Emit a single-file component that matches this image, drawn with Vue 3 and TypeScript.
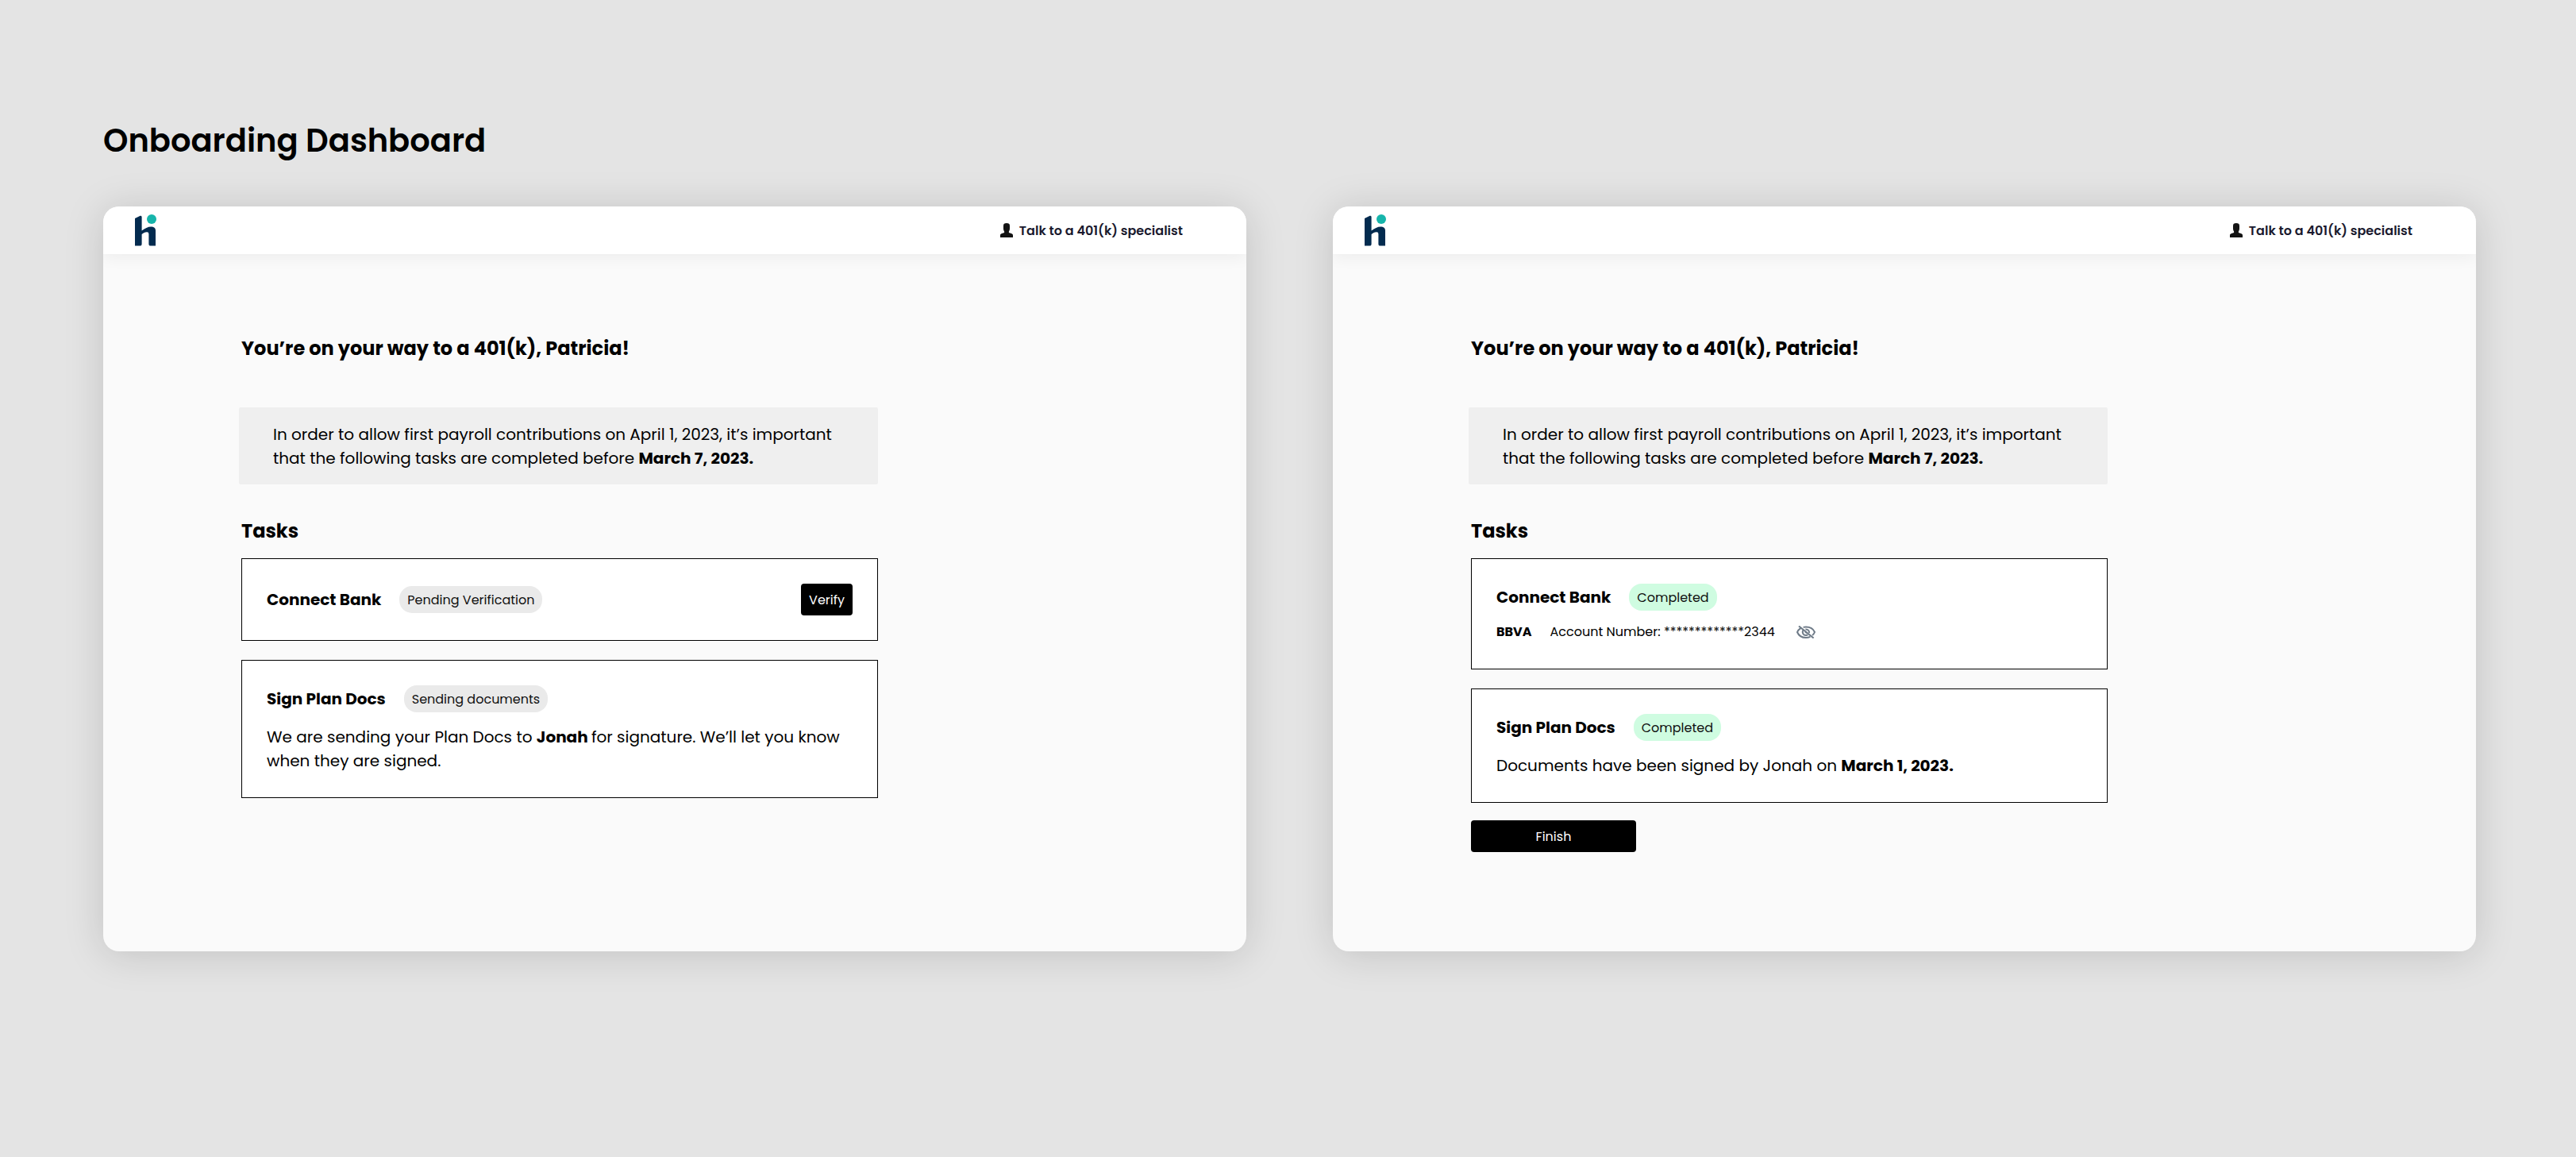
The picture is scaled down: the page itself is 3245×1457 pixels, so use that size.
<script setup lang="ts">
interface Task {
  title: string
  status: string
  done: boolean
  action?: string
  account?: { bank: string; number: string }
  message?: { before: string; strong: string; after: string }
}

interface Screen {
  id: string
  tasks: Task[]
  finish: boolean
}

const screens: Screen[] = [
  {
    id: 'pending',
    finish: false,
    tasks: [
      { title: 'Connect Bank', status: 'Pending Verification', done: false, action: 'Verify' },
      {
        title: 'Sign Plan Docs',
        status: 'Sending documents',
        done: false,
        message: {
          before: 'We are sending your Plan Docs to ',
          strong: 'Jonah ',
          after: 'for signature. We’ll let you know when they are signed.',
        },
      },
    ],
  },
  {
    id: 'completed',
    finish: true,
    tasks: [
      {
        title: 'Connect Bank',
        status: 'Completed',
        done: true,
        account: { bank: 'BBVA', number: '*************2344' },
      },
      {
        title: 'Sign Plan Docs',
        status: 'Completed',
        done: true,
        message: { before: 'Documents have been signed by Jonah on ', strong: 'March 1, 2023.', after: '' },
      },
    ],
  },
]
</script>

<template>
  <main class="board">
    <h1 class="board-title">Onboarding Dashboard</h1>
    <div class="screens">
      <section v-for="screen in screens" :key="screen.id" class="screen">
        <header class="topbar">
          <svg class="logo" viewBox="0 0 28 40" role="img" aria-label="hi">
            <path
              fill="#032b4f"
              d="M0 5 L6.6 1.8 Q8.6 1.2 8.6 3.2 V20.4 C12.5 17.4 16.5 15.4 20 15.4 C24 15.4 26 17 26 20.6 V39.6 H19.6 Q17.4 39.6 17.4 37.4 V24.4 Q17.4 22 14.8 22.2 C12.6 22.4 10.4 23.4 8.6 25 V37.4 Q8.6 39.6 6.4 39.6 H0 Z"
            />
            <circle cx="21" cy="6" r="6" fill="#17b5ab" />
          </svg>
          <a class="talk" href="#">
            <svg class="person" viewBox="0 0 16 18" aria-hidden="true">
              <path
                fill="#141414"
                d="M4 3.4 C4 1 5.2 0 8 0 C10.8 0 12 1 12 3.4 V6.8 C12 8.6 11.4 9.8 10.9 10.6 V12 L14 13 C15.5 13.5 16 14.2 16 15.4 V18 H0 V15.4 C0 14.2 .5 13.5 2 13 L5.1 12 V10.6 C4.6 9.8 4 8.6 4 6.8 Z"
              />
            </svg>
            <span>Talk to a 401(k) specialist</span>
          </a>
        </header>

        <div class="content">
          <h2 class="heading">You’re on your way to a 401(k), Patricia!</h2>
          <p class="notice">
            In order to allow first payroll contributions on April 1, 2023, it’s important
            that the following tasks are completed before <strong>March 7, 2023.</strong>
          </p>
          <h3 class="heading tasks-heading">Tasks</h3>
          <div class="tasks">
            <article v-for="task in screen.tasks" :key="task.title" class="card">
              <div class="card-row">
                <h4 class="card-title">{{ task.title }}</h4>
                <span class="pill" :class="{ done: task.done }">{{ task.status }}</span>
                <button v-if="task.action" type="button" class="btn verify">{{ task.action }}</button>
              </div>
              <div v-if="task.account" class="account">
                <strong>{{ task.account.bank }}</strong>
                <span>Account Number: {{ task.account.number }}</span>
                <button type="button" class="reveal" aria-label="Show account number">
                  <svg viewBox="0 0 24 16" fill="none" stroke="#6f7b88" stroke-width="2" aria-hidden="true">
                    <path d="M5.5 2.8 C3.4 4.2 1.8 6 1 8 C2.8 12.4 7 15 12 15 C14 15 15.8 14.6 17.4 13.9" />
                    <path d="M8.6 1.9 C9.7 1.6 10.8 1.5 12 1.5 C17 1.5 21.2 4 23 8 C22.4 9.5 21.4 10.9 20 12" />
                    <path d="M8.2 5.6 C6.8 8.6 8.6 12 12 12 C12.9 12 13.6 11.8 14.3 11.4" />
                    <path d="M11.4 4.4 C14.4 4.2 16.4 6.4 16 9" />
                    <path d="M11 7.4 L13 9.2" />
                    <path d="M3 .4 L21.6 15.6" />
                  </svg>
                </button>
              </div>
              <p v-if="task.message" class="message">
                {{ task.message.before }}<strong>{{ task.message.strong }}</strong>{{ task.message.after }}
              </p>
            </article>
          </div>
          <button v-if="screen.finish" type="button" class="btn finish">Finish</button>
        </div>
      </section>
    </div>
  </main>
</template>

<style>
body {
  margin: 0;
  background: #e4e4e4;
}
</style>

<style scoped>
.board {
  box-sizing: border-box;
  min-height: 100vh;
  padding: 147px 126px 120px 130px;
  font-family: Poppins, Inter, 'Open Sans', sans-serif;
  font-size: 20px;
  line-height: 30px;
  color: #000;
  background: #e4e4e4;
}

h1, h2, h3, h4, p {
  margin: 0;
}

.board-title {
  margin-bottom: 53px;
  font-size: 40px;
  line-height: 60px;
  font-weight: 600;
}

.screens {
  display: grid;
  grid-template-columns: 1fr 1fr;
  gap: 109px;
}

.screen {
  overflow: hidden;
  border-radius: 20px;
  background: #fafafa;
  box-shadow: 0 4px 50px rgba(0, 0, 0, 0.15);
}

.topbar {
  display: flex;
  align-items: center;
  justify-content: space-between;
  height: 60px;
  padding: 0 80px 0 40px;
  background: #fff;
  box-shadow: 0 4px 20px rgba(0, 0, 0, 0.06);
}

.logo {
  width: 28px;
  height: 40px;
}

.talk {
  display: flex;
  align-items: center;
  gap: 8px;
  font-size: 16px;
  line-height: 31px;
  font-weight: 600;
  color: #1a1a2e;
  text-decoration: none;
}

.person {
  width: 16px;
  height: 18px;
}

.content {
  max-width: 802px;
  padding: 101px 174px 125px;
}

.heading {
  font-size: 24px;
  line-height: 36px;
  font-weight: 700;
}

.notice {
  margin: 56px 0 41px -3px;
  padding: 19px 43px 18px;
  border-radius: 2px;
  background: #efefef;
}

.tasks-heading {
  margin-bottom: 16px;
}

.tasks {
  display: flex;
  flex-direction: column;
  gap: 24px;
}

.card {
  padding: 31px;
  border: 1px solid #000;
  background: #fff;
}

.card-row {
  display: flex;
  align-items: center;
}

.card-title {
  margin-right: 23px;
  font-size: 20px;
  font-weight: 700;
}

.pill {
  padding: 2px 10px 1px;
  border-radius: 16px;
  font-size: 16px;
  line-height: 31px;
  color: #111;
  background: #eaeaea;
}

.pill.done {
  background: #cffce1;
}

.btn {
  height: 40px;
  border: 0;
  border-radius: 4px;
  font-family: inherit;
  font-size: 16px;
  color: #fff;
  background: #000;
  cursor: pointer;
}

.verify {
  margin-left: auto;
  padding: 0 10px;
}

.finish {
  display: block;
  width: 208px;
  margin-top: 22px;
}

.account {
  display: flex;
  align-items: center;
  margin-top: 12px;
  gap: 23px;
  font-size: 16px;
}

.reveal {
  display: flex;
  padding: 0 4px;
  border: 0;
  background: none;
  cursor: pointer;
}

.reveal svg {
  width: 24px;
  height: 16px;
}

.message {
  margin-top: 16px;
}
</style>
